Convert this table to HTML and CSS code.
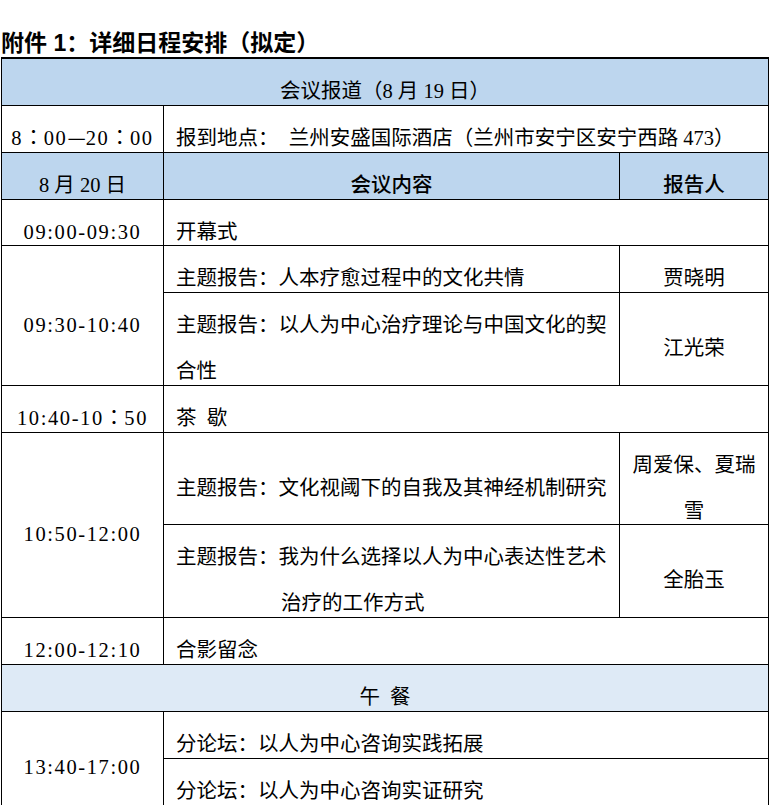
FILE: index.html
```html
<!DOCTYPE html>
<html lang="zh-CN">
<head>
<meta charset="utf-8">
<title>详细日程安排</title>
<link rel="stylesheet" href="styles.css">
</head>
<body>
<div class="title">附件 1：详细日程安排（拟定）</div>
<table class="sched">
<colgroup><col class="c1"><col class="c2"><col class="c3"></colgroup>
<tbody>
<tr class="hdr">
<td colspan="3" class="ctr"><span class="tx">会议报道（8 月 19 日）</span></td>
</tr>
<tr>
<td class="time"><span class="tx">8<span class="fw">：</span>00<span class="fw">—</span>20<span class="fw">：</span>00</span></td>
<td colspan="2" class="body"><span class="tx">报到地点：&ensp;兰州安盛国际酒店（兰州市安宁区安宁西路 473）</span></td>
</tr>
<tr class="hdr">
<td class="ctr"><span class="tx">8 月 20 日</span></td>
<td class="ctr strong"><span class="tx">会议内容</span></td>
<td class="ctr strong"><span class="tx">报告人</span></td>
</tr>
<tr>
<td class="time"><span class="tx">09:00-09:30</span></td>
<td colspan="2" class="body"><span class="tx">开幕式</span></td>
</tr>
<tr>
<td rowspan="2" class="time"><span class="tx">09:30-10:40</span></td>
<td class="body"><span class="tx">主题报告：人本疗愈过程中的文化共情</span></td>
<td class="name"><span class="tx">贾晓明</span></td>
</tr>
<tr>
<td class="body"><span class="tx">主题报告：以人为中心治疗理论与中国文化的契<br>合性</span></td>
<td class="name"><span class="tx">江光荣</span></td>
</tr>
<tr>
<td class="time"><span class="tx">10:40-10<span class="fw">：</span>50</span></td>
<td colspan="2" class="body"><span class="tx">茶&ensp;歇</span></td>
</tr>
<tr>
<td rowspan="2" class="time"><span class="tx">10:50-12:00</span></td>
<td class="body"><span class="tx">主题报告：文化视阈下的自我及其神经机制研究</span></td>
<td class="name"><span class="tx">周爱保、夏瑞<br>雪</span></td>
</tr>
<tr>
<td class="body"><span class="tx">主题报告：我为什么选择以人为中心表达性艺术<br><span class="indent">治疗的工作方式</span></span></td>
<td class="name"><span class="tx">全胎玉</span></td>
</tr>
<tr>
<td class="time"><span class="tx">12:00-12:10</span></td>
<td colspan="2" class="body"><span class="tx">合影留念</span></td>
</tr>
<tr class="meal">
<td colspan="3" class="ctr"><span class="tx">午&ensp;餐</span></td>
</tr>
<tr>
<td rowspan="2" class="time"><span class="tx">13:40-17:00</span></td>
<td colspan="2" class="body"><span class="tx">分论坛：以人为中心咨询实践拓展</span></td>
</tr>
<tr>
<td colspan="2" class="body"><span class="tx">分论坛：以人为中心咨询实证研究</span></td>
</tr>
</tbody>
</table>
</body>
</html>
```
FILE: styles.css
```css
html, body {
  margin: 0;
  padding: 0;
  background: #ffffff;
}

body {
  font-family: "Liberation Serif", "Noto Sans CJK SC", serif;
  font-size: 20.5px;
  color: #000000;
}

.title {
  font-family: "Liberation Sans", "Noto Sans CJK SC", sans-serif;
  font-weight: 700;
  font-size: 23px;
  line-height: 22px;
  padding: 32px 0 3px 1px;
  white-space: nowrap;
}

.sched {
  border-collapse: collapse;
  table-layout: fixed;
  width: 767px;
  margin-left: 1px;
}

.c1 { width: 162px; }
.c2 { width: 456px; }
.c3 { width: 149px; }

.sched td {
  border: 1px solid #000000;
  padding: 0 12px;
  line-height: 45.85px;
  vertical-align: middle;
  white-space: nowrap;
  overflow: hidden;
}

.sched tr:first-child td {
  border-top-width: 2px;
}

.tx {
  line-height: 20px;
  vertical-align: -10px;
}

.hdr td {
  background: #bdd6ee;
}

.meal td {
  background: #deeaf6;
}

.ctr {
  text-align: center;
}

.strong {
  font-weight: 500;
}

.sched td.time {
  text-align: center;
  padding: 0 2px;
  letter-spacing: 1.6px;
}

.fw {
  font-family: "Noto Sans CJK TC", "Noto Sans CJK SC", sans-serif;
  letter-spacing: 0;
}

.body {
  text-align: left;
}

.sched td.name {
  text-align: center;
  padding: 0 6px;
}

.indent {
  margin-left: 105px;
}
```
